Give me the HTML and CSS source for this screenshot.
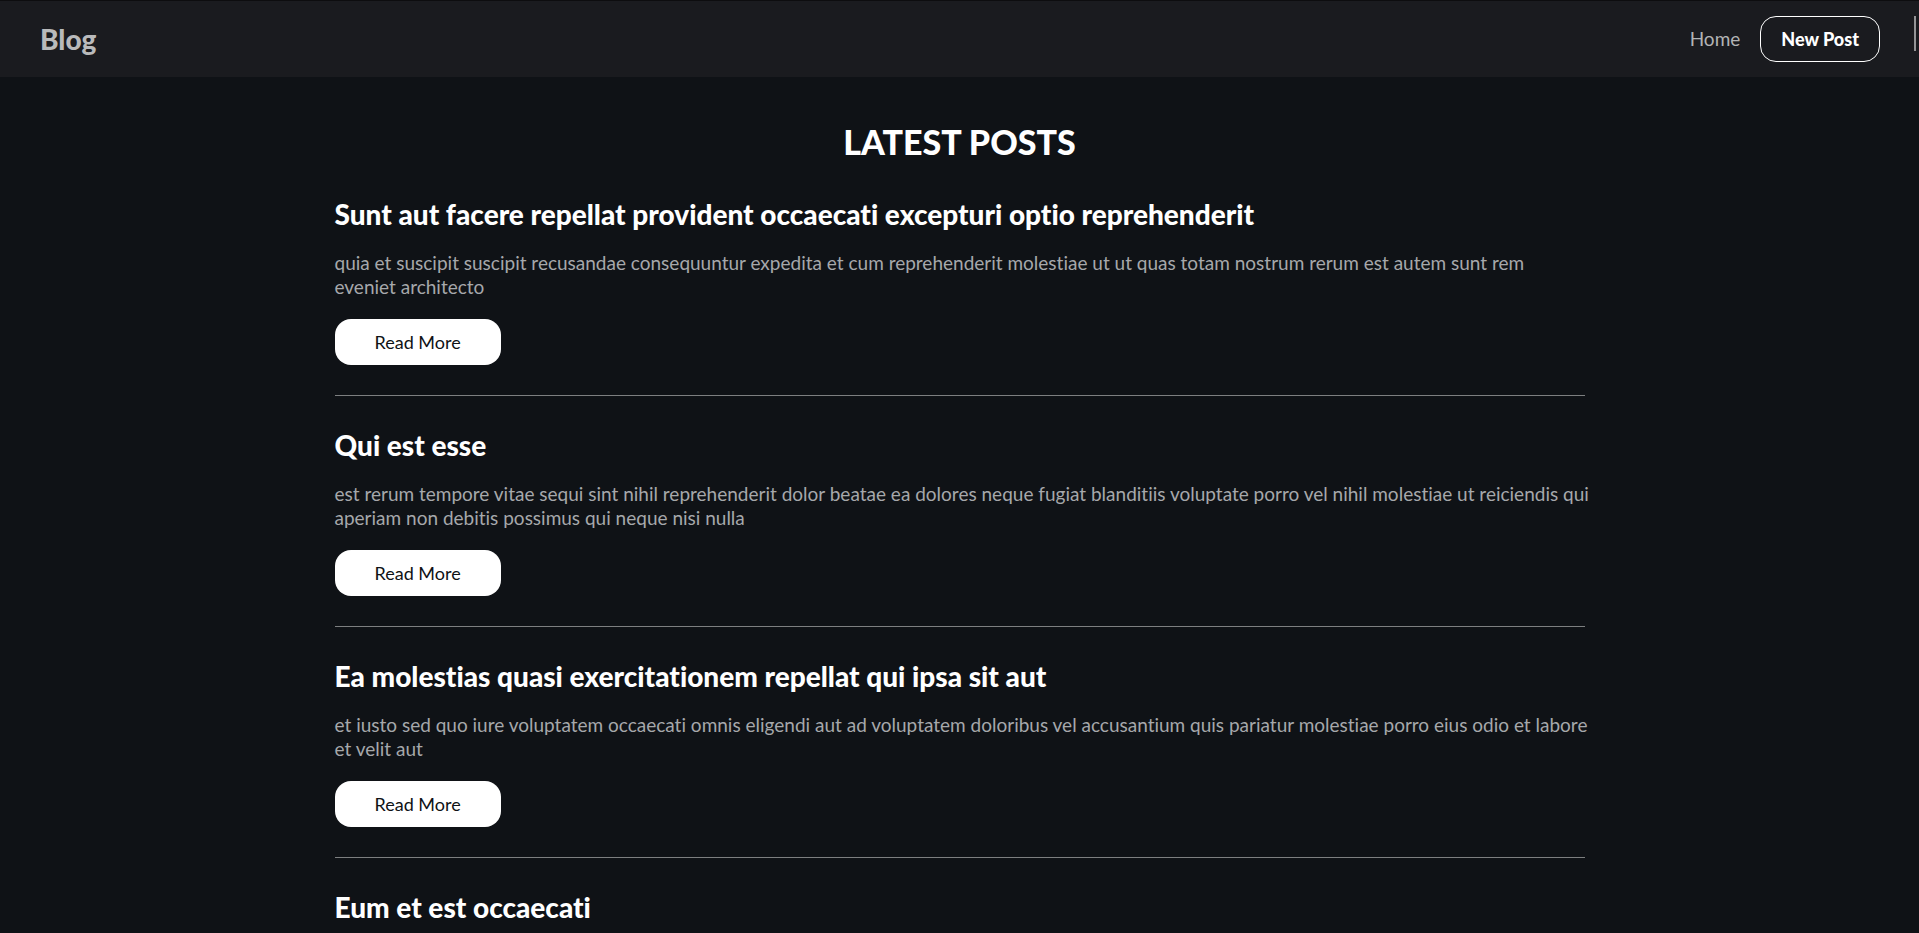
FILE: index.html
```html
<!DOCTYPE html>
<html lang="en">
<head>
<meta charset="utf-8">
<meta name="viewport" content="width=device-width, initial-scale=1">
<title>Blog</title>
<link rel="stylesheet" href="styles.css">
</head>
<body>
<header class="header">
  <a class="brand" href="#">Blog</a>
  <nav class="nav">
    <a class="nav-link" href="#">Home</a>
    <a class="nav-button" href="#">New Post</a>
  </nav>
</header>
<div class="scroll-thumb"></div>
<main class="main">
  <h1 class="page-title">Latest Posts</h1>
  <article class="post">
    <h2 class="post-title">Sunt aut facere repellat provident occaecati excepturi optio reprehenderit</h2>
    <p class="post-text">quia et suscipit suscipit recusandae consequuntur expedita et cum reprehenderit molestiae ut ut quas totam nostrum rerum est autem sunt rem <br>eveniet architecto</p>
    <a class="read-more" href="#">Read More</a>
  </article>
  <article class="post">
    <h2 class="post-title">Qui est esse</h2>
    <p class="post-text">est rerum tempore vitae sequi sint nihil reprehenderit dolor beatae ea dolores neque fugiat blanditiis voluptate porro vel nihil molestiae ut reiciendis qui <br>aperiam non debitis possimus qui neque nisi nulla</p>
    <a class="read-more" href="#">Read More</a>
  </article>
  <article class="post">
    <h2 class="post-title">Ea molestias quasi exercitationem repellat qui ipsa sit aut</h2>
    <p class="post-text">et iusto sed quo iure voluptatem occaecati omnis eligendi aut ad voluptatem doloribus vel accusantium quis pariatur molestiae porro eius odio et labore <br>et velit aut</p>
    <a class="read-more" href="#">Read More</a>
  </article>
  <article class="post">
    <h2 class="post-title">Eum et est occaecati</h2>
  </article>
</main>
</body>
</html>
```
FILE: styles.css
```css
* {
  box-sizing: border-box;
}

html {
  overflow: hidden;
}

body {
  margin: 0;
  background: #0f1216;
  color: #fff;
  font-family: Lato, "Open Sans", sans-serif;
  font-size: 19px;
  font-variant-ligatures: none;
  line-height: 24px;
}

a {
  color: inherit;
  text-decoration: none;
}

.header {
  display: flex;
  align-items: center;
  justify-content: space-between;
  padding: 15px 39px 15px 40px;
  border-top: 1px solid #0d0d0f;
  background: #1a1b1f;
}

.brand {
  color: #b9babb;
  font-size: 28px;
  font-weight: 900;
  line-height: 34px;
}

.nav {
  display: flex;
  align-items: center;
  gap: 20px;
  font-size: 18px;
}

.nav-link {
  color: #b3b4b5;
  font-size: 19px;
}

.nav-button {
  padding: 10px 20px;
  border: 1px solid #fff;
  border-radius: 16px;
  font-weight: 900;
}

.scroll-thumb {
  position: absolute;
  top: 16px;
  right: 3px;
  width: 2px;
  height: 35px;
  background: #949496;
}

.main {
  max-width: 1290px;
  margin: 0 auto;
  padding: 40px 20px 0;
}

.page-title {
  margin: 0 0 30px;
  font-size: 34px;
  font-weight: 900;
  line-height: 50px;
  text-align: center;
  text-transform: uppercase;
}

.post {
  margin-bottom: 32px;
  padding-bottom: 30px;
  border-bottom: 1px solid #7d7f80;
}

.post:last-child {
  margin-bottom: 0;
  padding-bottom: 0;
  border-bottom: 0;
}

.post-title {
  margin: 0 0 20px;
  font-size: 28px;
  font-weight: 900;
  line-height: 34px;
}

.post:last-child .post-title {
  margin-bottom: 0;
}

.post-text {
  margin: 0 0 20px;
  color: #a6a8ab;
}

@media (min-width: 1300px) {
  .post-text {
    white-space: nowrap;
  }
}

.read-more {
  display: inline-block;
  padding: 11px 40px;
  border-radius: 16px;
  background: #fff;
  color: #0f1216;
  font-size: 18px;
  vertical-align: top;
}
```
